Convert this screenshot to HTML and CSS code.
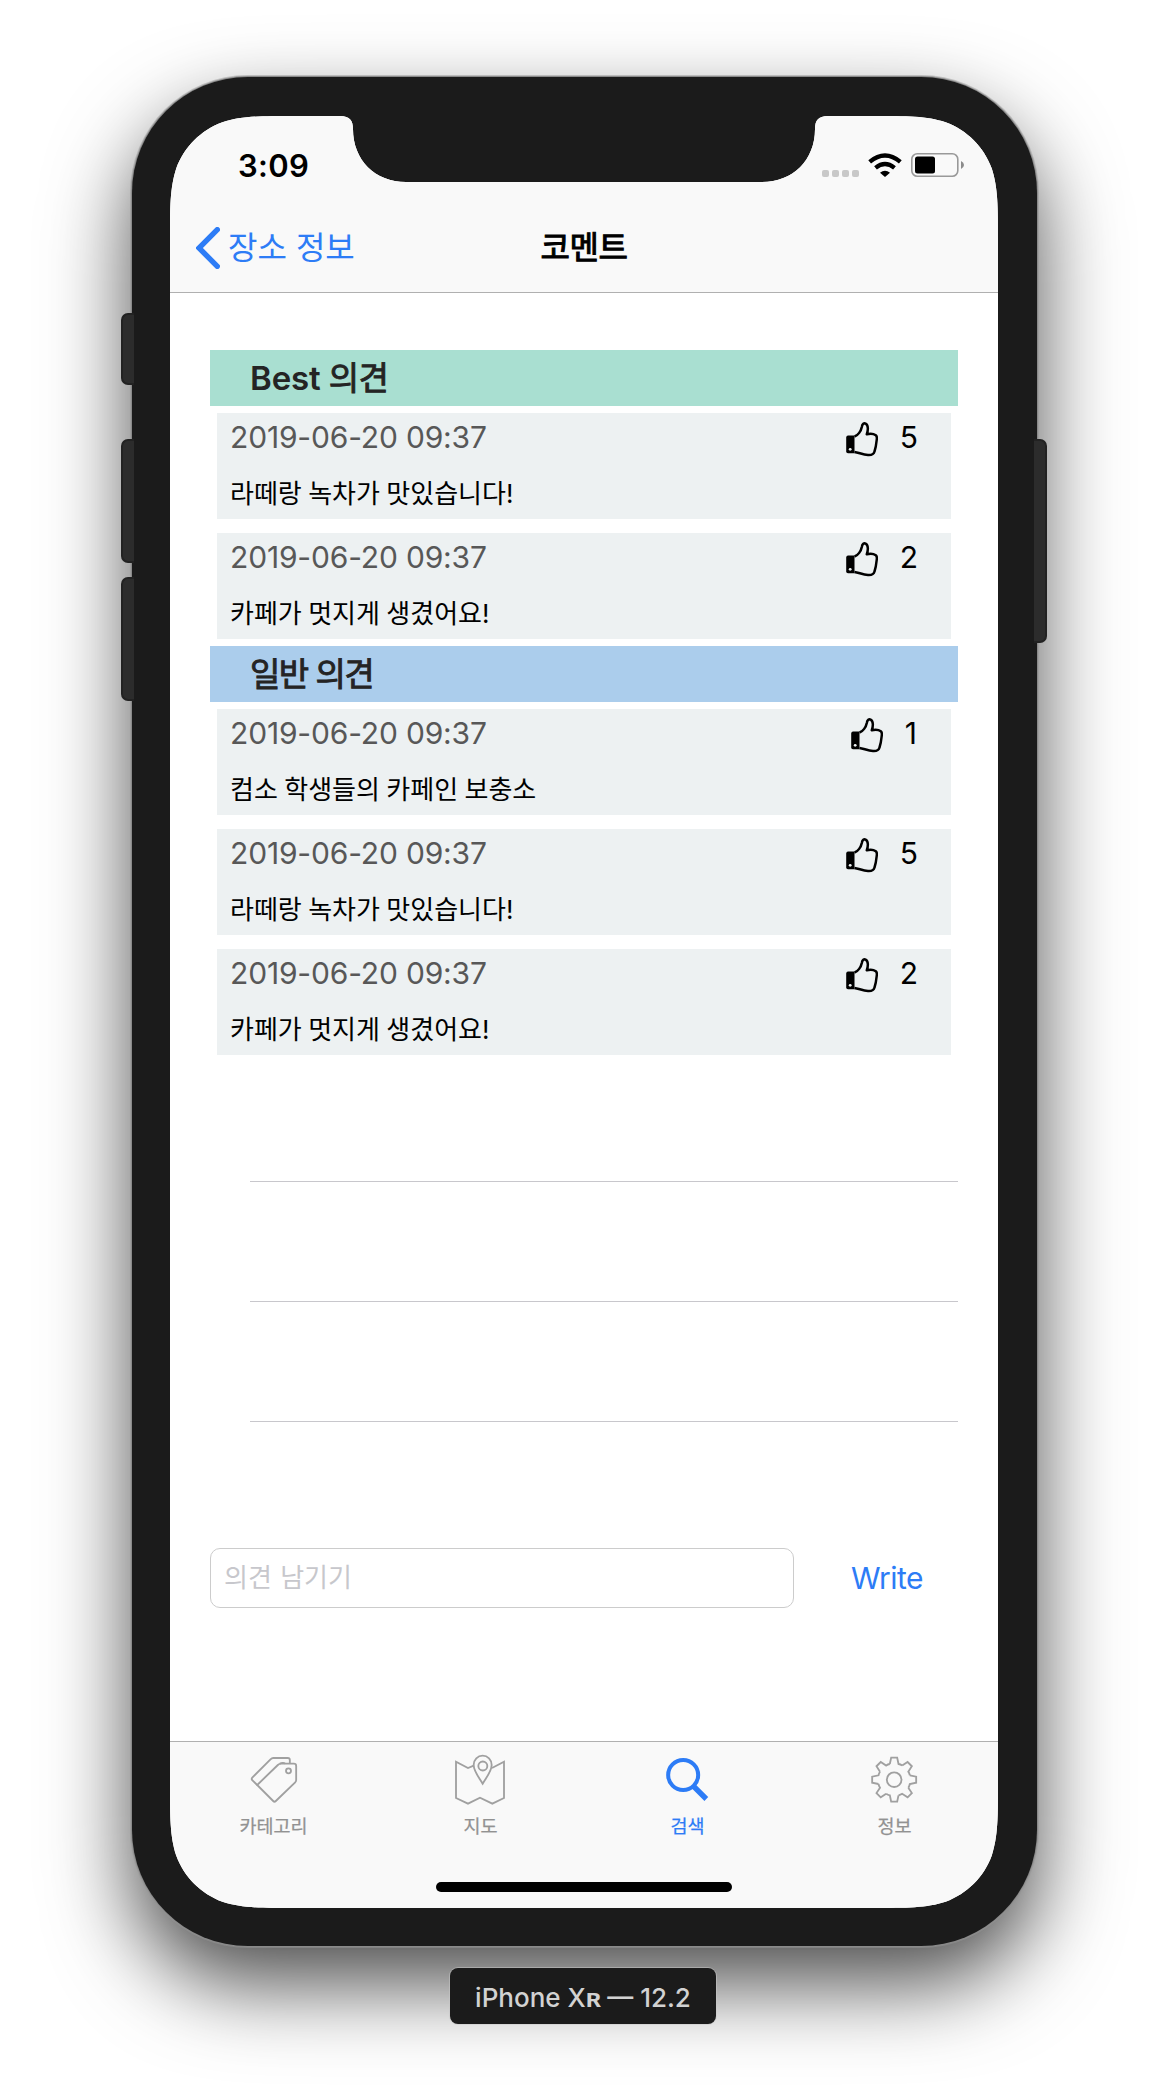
FILE: index.html
```html
<!DOCTYPE html>
<html lang="ko">
<head>
<meta charset="utf-8">
<title>코멘트</title>
<link rel="stylesheet" href="styles.css">
</head>
<body>
<svg class="defs" width="0" height="0">
  <symbol id="thumb" viewBox="0 0 32 35">
    <path d="M8.500 14.500C12 13.500 15 9 15.800 5C16.300 1.800 18 .9 19.600 1.600C22.500 3 22.200 8.500 20.800 12.300C24 11.600 28 12 29.800 13.300C31.300 14.500 31 16 30.700 18C30.300 22 29.700 26 28.500 29.500C27.700 32.500 26 33.300 22 33C17 32.800 12.500 30.500 8.500 30" fill="none" stroke="#000" stroke-width="2.500" stroke-linejoin="round"/>
    <path d="M2 13.500H8.500V31.300H2Q.2 31 .2 29.500V15.500Q.3 13.700 2 13.500Z"/>
    <circle cx="4.200" cy="27.300" r="1.400" fill="#edf1f2"/>
  </symbol>
</svg>

<div class="phone">
  <i class="key key-mute"></i>
  <i class="key key-up"></i>
  <i class="key key-down"></i>
  <i class="key key-side"></i>

  <div class="screen">
    <header class="bar">
      <div class="status">
        <span class="time">3:09</span>
        <div class="indicators">
          <svg class="dots" width="37" height="7" viewBox="0 0 37 7" fill="#c8c8c8"><rect width="7" height="7" rx="2"/><rect x="10" width="7" height="7" rx="2"/><rect x="20" width="7" height="7" rx="2"/><rect x="30" width="7" height="7" rx="2"/></svg>
          <svg class="wifi" width="34" height="24" viewBox="0 0 102 72"><g fill="none" stroke="#000" stroke-width="13"><path d="M5 26.500Q51-11.500 97 26.500"/><path d="M22.500 44.500Q51 21.500 79.500 44.500"/></g><path d="M36 59Q51 47.500 66 59L51 72Z"/></svg>
          <svg class="battery" width="53" height="24" viewBox="0 0 53 24"><rect x=".8" y=".8" width="46" height="22.400" rx="5.500" fill="none" stroke="#999" stroke-width="1.600"/><rect x="4" y="3.500" width="20" height="17" rx="2.500"/><path d="M50 8Q53 9.500 53 12T50 16Z" fill="#8c8c8c"/></svg>
        </div>
      </div>
      <nav class="nav">
        <a class="back"><svg width="24" height="42" viewBox="0 0 24 42"><path d="M21.300 2.700L3 21L21.300 39.300" fill="none" stroke="#2d7cf6" stroke-width="5.400" stroke-linecap="round" stroke-linejoin="miter"/></svg><span>장소 정보</span></a>
        <h1>코멘트</h1>
        <span></span>
      </nav>
    </header>

    <main class="content">
      <section>
        <h2 class="section-title best">Best <span>의견</span></h2>
        <article class="cell"><div class="card"><div class="meta"><time>2019-06-20 09:37</time><svg class="thumb"><use href="#thumb"/></svg><b>5</b></div><p>라떼랑 녹차가 맛있습니다!</p></div></article>
        <article class="cell"><div class="card"><div class="meta"><time>2019-06-20 09:37</time><svg class="thumb"><use href="#thumb"/></svg><b>2</b></div><p>카페가 멋지게 생겼어요!</p></div></article>
      </section>
      <section>
        <h2 class="section-title normal"><span>일반 의견</span></h2>
        <article class="cell"><div class="card"><div class="meta"><time>2019-06-20 09:37</time><svg class="thumb"><use href="#thumb"/></svg><b class="one">1</b></div><p>컴소 학생들의 카페인 보충소</p></div></article>
        <article class="cell"><div class="card"><div class="meta"><time>2019-06-20 09:37</time><svg class="thumb"><use href="#thumb"/></svg><b>5</b></div><p>라떼랑 녹차가 맛있습니다!</p></div></article>
        <article class="cell"><div class="card"><div class="meta"><time>2019-06-20 09:37</time><svg class="thumb"><use href="#thumb"/></svg><b>2</b></div><p>카페가 멋지게 생겼어요!</p></div></article>
        <div class="empty"></div>
        <div class="empty"></div>
        <div class="empty"></div>
      </section>
      <form class="composer">
        <div class="field">의견 남기기</div>
        <a class="write">Write</a>
      </form>
    </main>

    <footer class="tabbar">
      <div class="tabs">
        <a class="tab">
          <svg viewBox="84.500 72 156 156"><path d="M210 100V90Q210 84 204 84H160Q156 84 152 88L98 142Q93 147 98 151L112 165M180 101Q190 96 196 101"/><path d="M184 101H222Q229 101 229 108V150Q229 154 226 157L168 213Q164 217 160 213L112 165L174 105Q178 101 184 101Z"/><circle cx="206" cy="122.500" r="7.500"/></svg>
          <span>카테고리</span>
        </a>
        <a class="tab">
          <svg viewBox="705 72 156 156"><path d="M761 107L744 114L708 95V204L744 221L780 203L817 221L852 204V95L816 114"/><path d="M788 161C778 144 761 124 761 105A27 28 0 0 1 815 105C815 124 798 144 788 161Z"/><circle cx="788.500" cy="108" r="13.500"/></svg>
          <span>지도</span>
        </a>
        <a class="tab active">
          <svg viewBox="125 72 156 156"><circle cx="188.500" cy="135" r="45" stroke-width="12"/><path d="M219 168L258 207" stroke-width="16"/></svg>
          <span>검색</span>
        </a>
        <a class="tab">
          <svg viewBox="-75.500 -77 156 156"><path id="tooth" d="M-13-47L-9-66H9L13-47Q19-46 24-42.400"/><use href="#tooth" transform="rotate(45)"/><use href="#tooth" transform="rotate(90)"/><use href="#tooth" transform="rotate(135)"/><use href="#tooth" transform="rotate(180)"/><use href="#tooth" transform="rotate(225)"/><use href="#tooth" transform="rotate(270)"/><use href="#tooth" transform="rotate(315)"/><circle r="22"/></svg>
          <span>정보</span>
        </a>
      </div>
      <div class="home"></div>
    </footer>
  </div>
</div>
<div class="device-name">iPhone X<span>ʀ</span> — 12.2</div>
</body>
</html>
```
FILE: styles.css
```css
* { box-sizing: border-box; margin: 0; padding: 0; }
body {
  width: 1168px;
  height: 2096px;
  overflow: hidden;
  background: #fff;
  padding: 77px 0 0 1px;
  display: flex;
  flex-direction: column;
  align-items: center;
  font-family: Inter, "Noto Sans CJK KR", sans-serif;
  color: #000;
}
.defs { position: absolute; }

.phone {
  position: relative;
  width: 905px;
  height: 1869px;
  flex: none;
  padding: 39px 0 0 38px;
  background: #1b1b1b;
  border-radius: 116px;
  box-shadow: 0 0 0 1px #8a8a8a, 0 0 0 2px rgba(150, 150, 150, .5), 0 38px 84px rgba(0, 0, 0, .7);
}
.key {
  position: absolute;
  left: -11px;
  width: 13px;
  height: 124px;
  background: #2c2c2c;
  border: 2px solid #222;
  border-right: 0;
  border-radius: 7px 0 0 7px;
}
.key-mute { top: 236px; height: 72px; }
.key-up { top: 362px; }
.key-down { top: 500px; }
.key-side {
  left: auto;
  right: -10px;
  top: 362px;
  height: 204px;
  border: 2px solid #222;
  border-left: 0;
  border-radius: 0 7px 7px 0;
}

.screen {
  width: 828px;
  height: 1792px;
  display: flex;
  flex-direction: column;
  background: #fff;
  /* display outline with continuous corners and the sensor notch */
  clip-path: path("M127 0H170C180 0 183 5 183 13C183 44 205 66 236 66H592C623 66 645 44 645 13C645 5 648 0 658 0H701C738 0 756 0 775.600 6.200C797 14 814 31 821.800 52.400C828 72 828 90 828 127V1665C828 1702 828 1720 821.800 1739.600C814 1761 797 1778 775.600 1785.800C756 1792 738 1792 701 1792H127C90 1792 72 1792 52.400 1785.800C31 1778 14 1761 6.200 1739.600C0 1720 0 1702 0 1665V127C0 90 0 72 6.200 52.400C14 31 31 14 52.400 6.200C72 0 90 0 127 0Z");
}

.bar { flex: none; height: 177px; background: #f9f9f9; border-bottom: 1px solid #b0b0b0; }
.status { height: 88px; padding: 10px 34px 0 68px; display: flex; justify-content: space-between; align-items: center; }
.time { font-size: 31px; font-weight: 600; letter-spacing: .3px; }
.indicators { display: flex; align-items: flex-end; }
.wifi { margin-left: 9px; }
.battery { margin-left: 9px; }
.nav { height: 88px; padding: 0 26px; display: grid; grid-template-columns: 1fr auto 1fr; align-items: center; font-size: 32px; }
.back { display: flex; align-items: center; gap: 8px; color: #2d7cf6; letter-spacing: 0; }
.back span { padding-bottom: 6px; }
h1 { padding-bottom: 6px; font-size: 32px; font-weight: 400; letter-spacing: -.5px; -webkit-text-stroke: 1px #000; }

.content { flex: 1; padding: 57px 40px 0; }
.section-title { height: 56px; line-height: 57px; padding-left: 40px; font-size: 33px; font-weight: 600; color: #242424; letter-spacing: -.1px; }
.section-title span { font-weight: 400; letter-spacing: -.8px; -webkit-text-stroke: .9px #242424; }
.best { background: #a9dfd1; }
.normal { background: #abcdec; }
.normal span { letter-spacing: -1.5px; }
.cell { height: 120px; padding: 7px; }
.card { height: 106px; padding: 0 33px 0 13px; background: #edf1f2; }
.meta { display: flex; align-items: center; height: 48px; }
time { flex: 1; font-size: 30px; letter-spacing: -.17px; color: #585858; }
.thumb { width: 32px; height: 35px; margin: 5px 22px 0 0; }
.meta b { font-size: 30px; font-weight: 400; }
.meta .one { margin-right: 1px; }
.card p { padding-top: 8px; line-height: 50px; font-size: 26px; word-spacing: -.9px; }
.empty { height: 120px; margin-left: 40px; border-bottom: 1px solid #c8c7cc; }

.composer { margin-top: 126px; display: flex; align-items: center; height: 60px; }
.field { width: 584px; height: 60px; line-height: 57px; padding-left: 13px; border: 1px solid #ccc; border-radius: 10px; font-size: 26px; word-spacing: 1px; color: #c7c7cc; }
.write { margin-left: 57px; font-size: 30px; letter-spacing: -.5px; color: #2d7cf6; }

.tabbar { height: 167px; flex: none; background: #f9f9f9; border-top: 1px solid #b0b0b0; padding-top: 12px; display: flex; flex-direction: column; align-items: center; }
.tabs { display: grid; grid-template-columns: repeat(4, 207px); }
.tab { display: flex; flex-direction: column; align-items: center; color: #929292; font-size: 18.5px; line-height: 28px; gap: 6px; -webkit-text-stroke: .25px currentColor; }
.tab svg { width: 52px; height: 52px; fill: none; stroke: #a0a0a0; stroke-width: 5.5; }
.active { color: #2d7cf6; }
.active svg { stroke: #2d7cf6; }
.home { width: 296px; height: 10px; margin-top: 42px; border-radius: 5px; background: #000; }

.device-name {
  width: 266px;
  height: 56px;
  margin: 22px 3px 0 0;
  line-height: 59px;
  text-align: center;
  border-radius: 8px;
  background: #1b1b1b;
  box-shadow: 0 0 0 1px rgba(200, 200, 200, .5);
  color: #d2d2d2;
  font-size: 26px;
  font-weight: 500;
  z-index: 1;
}
.device-name span { font-weight: 700; letter-spacing: -.6px; }
```
